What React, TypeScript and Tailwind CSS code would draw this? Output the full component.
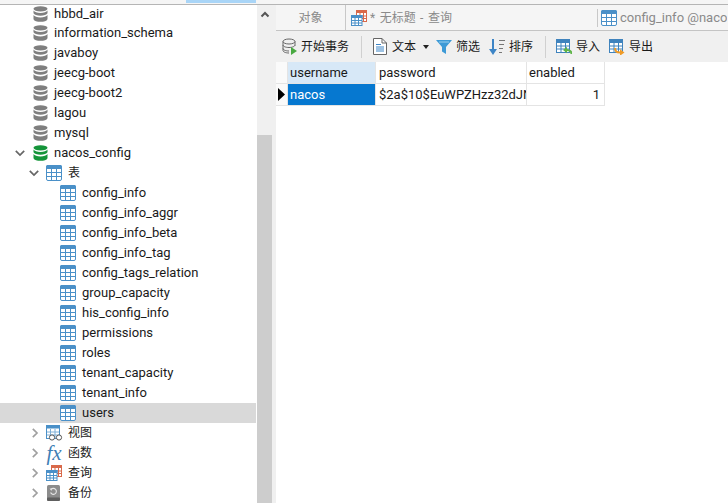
import React from "react";

const FONT = "font-['Roboto','Noto_Sans_CJK_SC',sans-serif]";

function Db({ green = false }: { green?: boolean }) {
  const c = green ? "#15953a" : "#7f7f7f";
  return (
    <svg width="15" height="16" viewBox="0 0 15 16" className="shrink-0">
      <ellipse cx="7.5" cy="2.8" rx="7" ry="2.6" fill={c} />
      <path d="M.5 4.6c1 1.7 3.6 2.3 7 2.3s6-.6 7-2.3v2.7c-.7 1.7-3.6 2.4-7 2.4s-6.3-.7-7-2.4z" fill={c} />
      <path d="M.5 9.1c1 1.7 3.6 2.3 7 2.3s6-.6 7-2.3v4.1c-.7 1.8-3.6 2.6-7 2.6s-6.3-.8-7-2.6z" fill={c} />
    </svg>
  );
}

function Tbl({ size = 16 }: { size?: number }) {
  return (
    <svg width={size} height={size} viewBox="0 0 16 16" className="shrink-0">
      <rect x="0.5" y="0.5" width="15" height="15" rx="1.5" fill="#fff" stroke="#4a90c8" />
      <rect x="0" y="0" width="16" height="4" rx="1.5" fill="#4a90c8" />
      <path d="M5.5 4v11M10.5 4v11M1 7.5h14M1 11.5h14" stroke="#4a90c8" strokeWidth="1" fill="none" />
    </svg>
  );
}

function Chevron({ open }: { open: boolean }) {
  return (
    <svg width="10" height="10" viewBox="0 0 10 10" className="shrink-0">
      {open ? (
        <path d="M.8 2.8L5 7l4.2-4.2" stroke="#666" strokeWidth="1.7" fill="none" />
      ) : (
        <path d="M2.8.8L7 5 2.8 9.2" stroke="#a0a0a0" strokeWidth="1.7" fill="none" />
      )}
    </svg>
  );
}

function ViewIcon() {
  return (
    <svg width="17" height="16" viewBox="0 0 17 16" className="-mr-px shrink-0">
      <rect x="0.5" y="0.5" width="13" height="13" fill="#fff" stroke="#4a90c8" />
      <rect x="0" y="0" width="14" height="3.5" fill="#4a90c8" />
      <path d="M4.5 4v9M9 4v9M1 7h12M1 10h12" stroke="#7fb0d8" strokeWidth="1" fill="none" />
      <circle cx="6" cy="12.5" r="2.6" fill="#fff" stroke="#555" />
      <circle cx="13" cy="12.5" r="2.6" fill="#fff" stroke="#555" />
    </svg>
  );
}

function QueryIcon() {
  return (
    <svg width="16" height="16" viewBox="0 0 16 16" className="shrink-0">
      <rect x="5.5" y="0.5" width="10" height="11" fill="#fff" stroke="#d9694a" />
      <rect x="5" y="0" width="11" height="3" fill="#d9694a" />
      <path d="M9 3v8M12.5 3v8M5 6h11M5 8.5h11" stroke="#d9694a" fill="none" />
      <rect x="0.5" y="5.5" width="10.5" height="10" fill="#fff" stroke="#4a90c8" />
      <rect x="0" y="5" width="11.5" height="3" fill="#4a90c8" />
      <path d="M4 8v7M7.5 8v7M1 10.5h10M1 13h10" stroke="#4a90c8" fill="none" />
    </svg>
  );
}

function BackupIcon() {
  return (
    <svg width="16" height="16" viewBox="0 0 16 16" className="shrink-0">
      <rect x="1" y="0" width="13" height="15.5" rx="1.5" fill="#8c8c8c" />
      <rect x="1" y="12.5" width="13" height="3.5" rx="1" fill="#5f5f5f" />
      <path d="M5 4.5A3 3 0 1 1 4.6 7.5" fill="none" stroke="#e6e6e6" strokeWidth="1.1" />
      <path d="M3.6 3.4L6 3.6 5.4 6z" fill="#e6e6e6" />
    </svg>
  );
}

function Row({ indent, children, label, chevron, selected, cjk, chevronGap = "mr-[5px]" }: {
  indent: number; children: React.ReactNode; label: string; chevron?: "open" | "closed"; selected?: boolean; cjk?: boolean; chevronGap?: string;
}) {
  return (
    <div className={`flex h-5 shrink-0 items-center ${selected ? "mr-px bg-[#d9d9d9]" : ""}`}>
      <div className="flex h-5 shrink-0 items-center justify-end" style={{ width: indent }}>
        {chevron && <span className={`${chevronGap} flex`}><Chevron open={chevron === "open"} /></span>}
      </div>
      {children}
      <span className={`ml-1.5 whitespace-nowrap text-[#1a1a1a] ${cjk ? "text-[12px]" : "text-[13px]"}`}>{label}</span>
    </div>
  );
}

const dbs = ["information_schema", "javaboy", "jeecg-boot", "jeecg-boot2", "lagou", "mysql"];
const tables = ["config_info", "config_info_aggr", "config_info_beta", "config_info_tag", "config_tags_relation", "group_capacity", "his_config_info", "permissions", "roles", "tenant_capacity", "tenant_info"];

function Label({ children }: { children: React.ReactNode }) {
  return <span className="whitespace-nowrap text-[12px] leading-none text-[#1a1a1a]">{children}</span>;
}

function GridIcon({ children }: { children: React.ReactNode }) {
  return (
    <svg width="16" height="16" viewBox="0 0 16 16" className="shrink-0">
      <rect x="0.5" y="0.5" width="13" height="13" fill="#fff" stroke="#3f83bd" />
      <rect x="0" y="0" width="14" height="4" fill="#3f83bd" />
      <path d="M5 4v9M9.5 4v9M1 7h12M1 10h12" stroke="#3f83bd" fill="none" />
      {children}
    </svg>
  );
}

export default function App() {
  return (
    <div className={`flex h-[503px] w-[728px] flex-col overflow-hidden bg-white ${FONT}`}>
      <div className="flex h-[5px] shrink-0 flex-col">
        <div className="flex h-1 bg-[#f5f5f5]">
          <div className="ml-[186px] h-[3px] w-[70px] bg-[#a9d5f7]" />
        </div>
        <div className="h-px bg-[#b5b5b5]" />
      </div>
      <div className="flex min-h-0 flex-1">
        <div className="flex w-[257px] shrink-0 flex-col overflow-hidden">
          <div className="flex h-[18px] shrink-0 items-center">
            <div className="w-[33px]" />
            <Db />
            <span className="ml-1.5 text-[13px] text-[#1a1a1a]">hbbd_air</span>
          </div>
          {dbs.map((d) => (
            <Row key={d} indent={33} label={d}><Db /></Row>
          ))}
          <Row indent={33} label="nacos_config" chevron="open" chevronGap="mr-2"><Db green /></Row>
          <Row indent={46} label="表" chevron="open" cjk chevronGap="mr-[7px]"><Tbl /></Row>
          {tables.map((t) => (
            <Row key={t} indent={60} label={t}><Tbl /></Row>
          ))}
          <Row indent={60} label="users" selected><Tbl /></Row>
          <Row indent={46} label="视图" chevron="closed" cjk chevronGap="mr-[6px]"><ViewIcon /></Row>
          <Row indent={46} label="函数" chevron="closed" cjk chevronGap="mr-[6px]">
            <span className="flex w-4 justify-center font-['Liberation_Serif',serif] text-[21px] italic leading-none text-[#3f7fb5]">fx</span>
          </Row>
          <Row indent={46} label="查询" chevron="closed" cjk chevronGap="mr-[6px]"><QueryIcon /></Row>
          <Row indent={46} label="备份" chevron="closed" cjk chevronGap="mr-[6px]"><BackupIcon /></Row>
        </div>
        <div className="flex w-[19px] shrink-0 flex-col bg-[#f0f0f0]">
          <div className="flex h-[130px] w-[15px] justify-center pt-[5px]">
            <svg width="10" height="8" viewBox="0 0 10 8"><path d="M1.5 6.5L5 3l3.5 3.5" stroke="#555" strokeWidth="2" fill="none" /></svg>
          </div>
          <div className="w-[15px] flex-1 bg-[#cdcdcd]" />
        </div>
        <div className="flex min-w-0 flex-1 flex-col">
          <div className="flex h-[25px] shrink-0 items-center bg-[#f5f5f5] text-[12px] text-[#8a8a8a]">
            <div className="flex h-[25px] w-[70px] shrink-0 items-center justify-center border-r border-[#c8c8c8] pt-px">对象</div>
            <div className="flex w-[251px] shrink-0 items-center gap-[3px] pl-[5px]"><QueryIcon /><span className="whitespace-nowrap pt-px [word-spacing:1.5px]">* 无标题 - 查询</span></div>
            <div className="flex h-[18px] items-center gap-[3px] overflow-hidden border-l border-[#c8c8c8] pl-[3px]">
              <Tbl />
              <span className="whitespace-nowrap text-[13px]">config_info @naco</span>
            </div>
          </div>
          <div className="h-px shrink-0 bg-[#c4c4c4]" />
          <div className="flex h-[31px] shrink-0 items-center bg-[#f0f0f0] pl-[6px]">
            <svg width="16" height="18" viewBox="0 0 16 18" className="mr-[3px] shrink-0">
              <ellipse cx="7" cy="3.5" rx="6" ry="2.5" fill="none" stroke="#666" />
              <path d="M1 3.5v9c0 1.4 2.7 2.5 6 2.5M13 3.5v4M1 7c0 1.4 2.7 2.5 6 2.5s6-1.1 6-2.5M1 10.5c0 1.4 2.7 2.5 6 2.5" fill="none" stroke="#666" />
              <path d="M9 9l6 4-6 4z" fill="#49a942" />
            </svg>
            <Label>开始事务</Label>
            <div className="ml-3 h-[22px] w-px bg-[#d0d0d0]" />
            <svg width="14" height="17" viewBox="0 0 14 17" className="ml-[11px] mr-[5px] shrink-0">
              <path d="M.5.5h8.5l4.5 4.5v11.5H.5z" fill="#fff" stroke="#666" />
              <path d="M9 .5V5h4.5" fill="none" stroke="#666" />
              <path d="M3 6.5h5M3 9h8M3 11h8M3 13h8" stroke="#3d85c6" fill="none" />
            </svg>
            <Label>文本</Label>
            <svg width="6" height="4" viewBox="0 0 6 4" className="ml-[7px] shrink-0"><path d="M0 0h6L3 4z" fill="#222" /></svg>
            <svg width="16" height="16" viewBox="0 0 16 16" className="ml-[7px] mr-1 shrink-0">
              <path d="M0 1h16l-6 7v7l-4-2.5V8z" fill="#3d9ad6" />
              <path d="M3 3h10" stroke="#9bd0ef" fill="none" />
            </svg>
            <Label>筛选</Label>
            <svg width="16" height="18" viewBox="0 0 16 18" className="ml-[9px] mr-1 shrink-0">
              <path d="M4 1v12" stroke="#3d85c6" strokeWidth="2" fill="none" />
              <path d="M0 11l4 6 4-6z" fill="#3d85c6" />
              <path d="M10 2.5h6M10 6.5h5M10 10.5h4M10 14.5h3" stroke="#777" fill="none" />
            </svg>
            <Label>排序</Label>
            <div className="ml-3 h-[22px] w-px bg-[#d0d0d0]" />
            <span className="ml-2.5 mr-1 flex shrink-0">
              <GridIcon>
                <path d="M15.5 15c0-3-2-4-5-4" stroke="#5fb548" strokeWidth="2" fill="none" />
                <path d="M7 11l4-3.2v6.4z" fill="#5fb548" />
              </GridIcon>
            </span>
            <Label>导入</Label>
            <span className="ml-[9px] mr-1 flex shrink-0">
              <GridIcon>
                <path d="M6 9c0 3 2 4.5 5 4.5" stroke="#ef9a26" strokeWidth="2" fill="none" />
                <path d="M15.5 13.5l-4.5-3.2v6.4z" fill="#ef9a26" />
              </GridIcon>
            </span>
            <Label>导出</Label>
          </div>
          <div className="flex-1 bg-white text-[13px] text-[#1a1a1a]">
            <div className="grid h-[44px] w-[329px] grid-cols-[12px_88px_151px_78px] grid-rows-[22px_22px]">
              <div className="border-r border-b border-[#e4e4e4] bg-[#fafafa]" />
              <div className="flex items-center border-r border-b border-[#e4e4e4] bg-[#d7e8f7] pl-[2px]">username</div>
              <div className="flex items-center border-r border-b border-[#e4e4e4] pl-[3px]">password</div>
              <div className="flex items-center border-r border-b border-[#e4e4e4] pl-[2px]">enabled</div>
              <div className="flex items-center justify-center border-r border-b border-[#e4e4e4] bg-[#fafafa]">
                <svg width="7" height="13" viewBox="0 0 7 13"><path d="M0 0l7 6.5L0 13z" fill="#000" /></svg>
              </div>
              <div className="flex items-center border-r border-b border-[#e4e4e4] bg-[#0678d0] pl-[2px] text-white">nacos</div>
              <div className="flex items-center overflow-hidden whitespace-nowrap border-r border-b border-[#e4e4e4] pl-[3px]">$2a$10$EuWPZHzz32dJN1</div>
              <div className="flex items-center justify-end border-r border-b border-[#e4e4e4] pr-[4px]">1</div>
            </div>
          </div>
        </div>
      </div>
    </div>
  );
}
